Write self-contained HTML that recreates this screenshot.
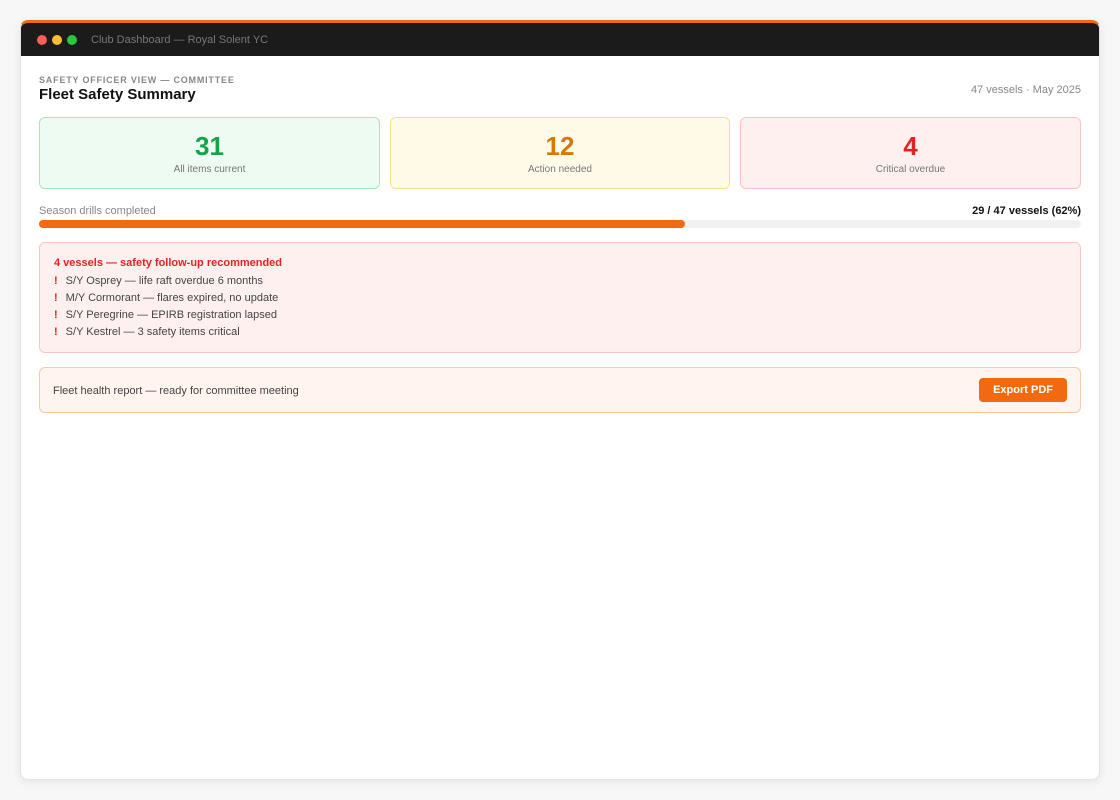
<!DOCTYPE html>
<html><head><meta charset="utf-8"><style>
*{box-sizing:border-box;margin:0;padding:0}
body{width:1120px;height:800px;background:#f7f7f7;font-family:"Liberation Sans",sans-serif;position:relative;overflow:hidden}
.win{position:absolute;left:20px;top:20px;width:1080px;height:760px;background:#fff;border-radius:8px;overflow:hidden;box-shadow:0 2px 10px rgba(0,0,0,.08);border:1px solid #e4e4e4;border-top:3px solid #f26a0f}
.bar{height:33px;background:#1b1b1b;display:flex;align-items:center;padding-left:16px}
.dot{width:10px;height:10px;border-radius:50%;margin-right:5px}
.bar span{color:#777;font-size:11px;margin-left:9px}
.c{position:absolute;left:18px;right:18px;top:33px}
.sub{position:absolute;top:19px;font-size:9px;font-weight:bold;letter-spacing:.8px;color:#888}
h1{position:absolute;top:30px;font-size:15px;color:#111}
.meta{position:absolute;right:0;top:28px;font-size:11px;color:#888}
.card{position:absolute;top:61px;height:72px;border-radius:6px;text-align:center}
.card b{display:block;font-size:26px;margin-top:13px}
.card span{font-size:10px;color:#777;display:block;margin-top:2px}
.lbl{position:absolute;top:149px;font-size:11px;color:#888}
.lblr{position:absolute;right:0;top:149px;font-size:11px;color:#111;font-weight:bold}
.track{position:absolute;top:164px;left:0;right:0;height:8px;background:#f0f0f0;border-radius:4px}
.fill{width:62%;height:8px;background:#f26a0f;border-radius:4px}
.alert{position:absolute;top:186px;left:0;right:0;height:111px;background:#fff0f0;border:1px solid #fbc4c4;border-radius:6px;padding:14px 14px}
.alert h3{font-size:11px;color:#e02424;margin-bottom:4px}
.alert p{font-size:11px;color:#444;line-height:17px}
.alert p i{font-style:normal;color:#e02424;font-weight:bold;margin-right:8px}
.rep{position:absolute;top:311px;left:0;right:0;height:46px;background:#fff4ee;border:1px solid #fcc9a8;border-radius:6px;padding:0 13px;display:flex;align-items:center;justify-content:space-between;font-size:11px;color:#444}
.rep>span:first-child{margin-top:2px}
.btn{background:#f26a0f;color:#fff;font-weight:bold;font-size:11px;padding:6px 14px;border-radius:4px}
</style></head><body>
<div class="win">
<div class="bar"><div class="dot" style="background:#ff5f57"></div><div class="dot" style="background:#febc2e"></div><div class="dot" style="background:#28c840"></div><span>Club Dashboard — Royal Solent YC</span></div>
<div class="c">
<div class="sub">SAFETY OFFICER VIEW — COMMITTEE</div>
<h1>Fleet Safety Summary</h1>
<div class="meta">47 vessels · May 2025</div>
<div class="card" style="left:0;width:341px;background:#edfbf2;border:1px solid #a9e6bd"><b style="color:#17a34a">31</b><span>All items current</span></div>
<div class="card" style="left:351px;width:340px;background:#fffbe8;border:1px solid #f7e08a"><b style="color:#d97706">12</b><span>Action needed</span></div>
<div class="card" style="left:701px;width:341px;background:#fff0f0;border:1px solid #fbc4c4"><b style="color:#e02424">4</b><span>Critical overdue</span></div>
<div class="lbl">Season drills completed</div>
<div class="lblr">29 / 47 vessels (62%)</div>
<div class="track"><div class="fill"></div></div>
<div class="alert"><h3>4 vessels — safety follow-up recommended</h3>
<p><i>!</i>S/Y Osprey — life raft overdue 6 months</p>
<p><i>!</i>M/Y Cormorant — flares expired, no update</p>
<p><i>!</i>S/Y Peregrine — EPIRB registration lapsed</p>
<p><i>!</i>S/Y Kestrel — 3 safety items critical</p></div>
<div class="rep"><span>Fleet health report — ready for committee meeting</span><span class="btn">Export PDF</span></div>
</div></div>
</body></html>
